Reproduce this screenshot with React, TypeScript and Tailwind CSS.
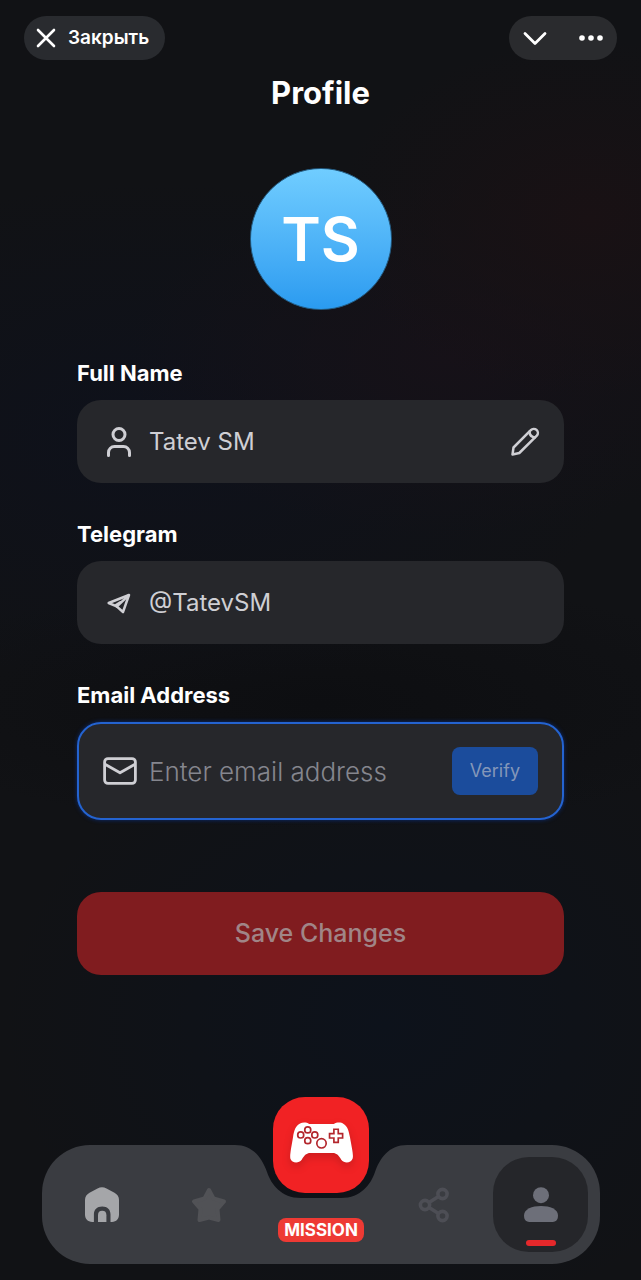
import React, { useState } from 'react';
import { User } from 'lucide-react';

const CloseIcon = () => (
  <svg width="20" height="20" viewBox="0 0 20 20" fill="none" stroke="currentColor" strokeWidth="2.6" strokeLinecap="round">
    <path d="M2 2l16 16M18 2l-16 16" />
  </svg>
);

const ChevronIcon = () => (
  <svg width="24" height="16" viewBox="0 0 24 16" fill="none" stroke="currentColor" strokeWidth="2.8" strokeLinecap="round" strokeLinejoin="round">
    <path d="M2 3.500l10 10L22 3.500" />
  </svg>
);

const DotsIcon = () => (
  <svg width="24" height="6" viewBox="0 0 24 6" fill="currentColor">
    <circle cx="3" cy="3" r="2.8" />
    <circle cx="12" cy="3" r="2.8" />
    <circle cx="21" cy="3" r="2.8" />
  </svg>
);

const PencilIcon = () => (
  <svg width="30" height="30" viewBox="0 0 30 30" fill="none" stroke="currentColor" strokeWidth="2.5" strokeLinejoin="round" strokeLinecap="round">
    <path d="M2.500 27.500L3.500 20.500L20.800 3.200a3.900 3.900 0 0 1 6 5.500L9.300 26Z" />
    <path d="M19.500 4.800c.2 3.200 2 5.200 5.500 5.600" />
  </svg>
);

const PlaneIcon = () => (
  <svg width="24" height="22" viewBox="0 0 72 66" fill="none" stroke="currentColor" strokeWidth="7.500" strokeLinejoin="round" strokeLinecap="round">
    <path d="M5 33L66 9L48 60L29 43Z" />
    <path d="M64 11L30 43" />
    <path d="M29 43L27 39L40 31" />
  </svg>
);

const MailIcon = () => (
  <svg width="34" height="28" viewBox="0 0 34 28" fill="none" stroke="currentColor" strokeWidth="2.8" strokeLinejoin="round">
    <rect x="1.6" y="1.6" width="30.8" height="24.8" rx="3.4" />
    <path d="M2 7.200l15 8.600l15-8.600" />
  </svg>
);

const HomeIcon = () => (
  <svg width="34" height="35" viewBox="0 0 34 35" fill="currentColor">
    <path d="M12.500 1.500c3-1.600 6-1.600 9 0l8 4.300c3 1.700 4.500 4 4.500 7.200v14.500c0 4.500-2.500 7.200-7 7.500h-1.500v-7.500c0-5-3-8-8.300-8s-8.300 3-8.300 8V35H7.300C2.700 34.700 0 32 0 27.500V13c0-3.200 1.500-5.500 4.500-7.200Z" />
    <path d="M13 35v-6.800c0-3 1.400-4.400 4.200-4.400s4.200 1.400 4.200 4.400V35Z" />
  </svg>
);

const StarIcon = () => (
  <svg width="36" height="36" viewBox="0 0 36 36" fill="currentColor" stroke="currentColor" strokeWidth="4" strokeLinejoin="round">
    <path d="M18 3L22.500 11.500L33 14.500L26.500 22L27.500 33L18 30.500L8.500 33L9.500 22L3 14.500L13.500 11.500Z" />
  </svg>
);

const ShareIcon = () => (
  <svg width="32" height="36" viewBox="0 0 32 36" fill="none" stroke="currentColor" strokeWidth="3.600">
    <circle cx="7" cy="18" r="4.600" />
    <circle cx="24.500" cy="7" r="4.600" />
    <circle cx="24.500" cy="29" r="4.600" />
    <path d="M11 15.500L20.500 9.500M11 20.500L20.500 26.500" />
  </svg>
);

const ProfileIcon = () => (
  <svg width="34" height="35" viewBox="0 0 34 35" fill="currentColor">
    <circle cx="17" cy="8.200" r="8" />
    <path d="M17 19c9 0 17 3 17 9.500 0 5-2.500 6.500-7 6.500H7c-4.500 0-7-1.500-7-6.500C0 22 8 19 17 19Z" />
  </svg>
);

const GamepadIcon = () => (
  <svg width="63" height="42" viewBox="0 0 188 124" className="drop-shadow-lg">
    <path
      fill="#fff"
      d="M30 4C38-1 50 0 57 5H131C139 0 152-1 160 5C172 12 175 25 179 45C184 75 190 98 187 108C182 122 163 125 153 112C145 98 138 92 128 92H60C50 92 43 98 35 112C25 125 5 122 1 108C-1 98 5 70 9 45C12 25 16 12 30 4Z"
    />
    <g fill="none" stroke="#b3262c" strokeWidth="5">
      <circle cx="32" cy="38" r="9" />
      <circle cx="53" cy="23" r="9" />
      <circle cx="74" cy="38" r="9" />
      <circle cx="53" cy="55" r="9" />
      <circle cx="94" cy="63" r="14" />
      <path d="M131 21h13v13h13v13h-13v13h-13v-13h-13v-13h13Z" />
    </g>
  </svg>
);

const inputClass = 'min-w-0 flex-1 bg-transparent text-2xl text-[#cfcfd4] outline-none';
const labelClass = 'block text-[22px] leading-[30px] font-bold text-white';
const tabClass = 'flex size-[95px] items-center justify-center';

const Header: React.FC = () => (
  <header className="flex items-center justify-between px-6 pt-4">
    <button className="flex h-11 items-center gap-3 rounded-full bg-[#292b2f] pr-4 pl-3 text-[19px] font-semibold text-white">
      <CloseIcon />
      Закрыть
    </button>
    <div className="flex h-11 items-center gap-8 rounded-full bg-[#2a2b2e] px-[14px] text-white">
      <button aria-label="Collapse"><ChevronIcon /></button>
      <button aria-label="More"><DotsIcon /></button>
    </div>
  </header>
);

const BottomNav: React.FC = () => (
  <nav className="mt-auto pr-[41px] pb-4 pl-[42px]">
    <div className="relative">
      {/* bar with the notch under the mission button */}
      <div className="absolute inset-0 flex text-[#3a3c41]">
        <div className="flex-1 rounded-l-[48px] bg-current" />
        <svg width="172" height="119" viewBox="0 0 172 119" fill="currentColor">
          <path d="M0 0C18 0 27 13 32 27C36 39 46 53 66 53H106C126 53 136 39 140 27C145 13 154 0 172 0V119H0Z" />
        </svg>
        <div className="flex-1 rounded-r-[48px] bg-current" />
      </div>
      <div className="relative flex items-start justify-between p-3">
        <div className="flex gap-3">
          <button aria-label="Home" className={`${tabClass} text-[#a5a6a9]`}><HomeIcon /></button>
          <button aria-label="Favorites" className={`${tabClass} text-[#515256]`}><StarIcon /></button>
        </div>
        <button className="-mt-[60px] flex flex-col items-center gap-[25px]">
          <span className="flex size-24 items-center justify-center rounded-[32px] bg-[#f12224] pb-1"><GamepadIcon /></span>
          <span className="rounded-lg bg-[#ee3a34] px-[6px] text-[17px] leading-6 font-bold text-white">MISSION</span>
        </button>
        <div className="flex gap-3">
          <button aria-label="Share" className={`${tabClass} text-[#4d4e55]`}><ShareIcon /></button>
          <button aria-label="Profile" className={`${tabClass} relative rounded-[36px] bg-[#25262a] text-[#6d6f79]`}>
            <ProfileIcon />
            <span className="absolute bottom-[6px] h-[6px] w-[30px] rounded-full bg-[#e5282b]" />
          </button>
        </div>
      </div>
    </div>
  </nav>
);

export default function App() {
  const [name, setName] = useState('Tatev SM');
  const [email, setEmail] = useState('');

  return (
    <div className="flex min-h-screen flex-col bg-[#111215] bg-[radial-gradient(ellipse_40%_14%_at_92%_17%,#191114_0%,transparent_100%),radial-gradient(ellipse_50%_14%_at_70%_28%,#161118_0%,transparent_100%),radial-gradient(ellipse_75%_20%_at_25%_34%,#0e111b_0%,transparent_100%),radial-gradient(ellipse_70%_10%_at_50%_55%,#0d0e11_0%,transparent_100%),radial-gradient(ellipse_60%_24%_at_60%_80%,#0d121b_0%,transparent_100%)] font-[Inter,sans-serif]">
      <Header />
      <h1 className="mt-[14px] text-center text-[31px] leading-[38px] font-bold text-white">Profile</h1>
      <div className="mx-auto mt-14 flex size-[142px] items-center justify-center rounded-full border border-[#235a80] bg-linear-to-b from-[#70cdff] to-[#2a9bf0] text-[60px] font-semibold text-white">
        TS
      </div>

      <form className="mt-12 mb-24 px-[77px]" onSubmit={(e) => e.preventDefault()}>
        <div className="flex flex-col gap-9">
          <div>
            <label htmlFor="name" className={labelClass}>Full Name</label>
            <div className="mt-3 flex h-[83px] items-center gap-3 rounded-3xl bg-[#26272b] px-6 text-[#cfcfd4]">
              <User size={36} strokeWidth={2} />
              <input id="name" value={name} onChange={(e) => setName(e.target.value)} className={inputClass} />
              <button type="button" aria-label="Edit name"><PencilIcon /></button>
            </div>
          </div>
          <div>
            <label htmlFor="telegram" className={labelClass}>Telegram</label>
            <div className="mt-3 flex h-[83px] items-center gap-3 rounded-3xl bg-[#26272b] px-6 text-[#cfcfd4]">
              <span className="flex w-9 justify-center"><PlaneIcon /></span>
              <input id="telegram" value="@TatevSM" readOnly className={inputClass} />
            </div>
          </div>
          <div>
            <label htmlFor="email" className={labelClass}>Email Address</label>
            <div className="mt-3 flex h-[98px] items-center gap-3 rounded-3xl border-2 border-[#2463d0] bg-[#26272b] px-6 text-[#cfcfd4] shadow-[0_0_4px_#0b2d78]">
              <MailIcon />
              <input
                id="email"
                type="email"
                value={email}
                onChange={(e) => setEmail(e.target.value)}
                placeholder="Enter email address"
                className="min-w-0 flex-1 bg-transparent text-[26px] font-light text-[#cfcfd4] outline-none placeholder:text-[#85868e]"
              />
              <button type="button" disabled className="h-12 rounded-lg bg-[#1b4c9c] px-[18px] text-lg text-[#8497b9]">Verify</button>
            </div>
          </div>
        </div>
        <button type="submit" disabled className="mt-18 h-[83px] w-full rounded-3xl bg-[#801c1f] text-[25px] font-medium text-[#a08587]">
          Save Changes
        </button>
      </form>

      <BottomNav />
    </div>
  );
}
